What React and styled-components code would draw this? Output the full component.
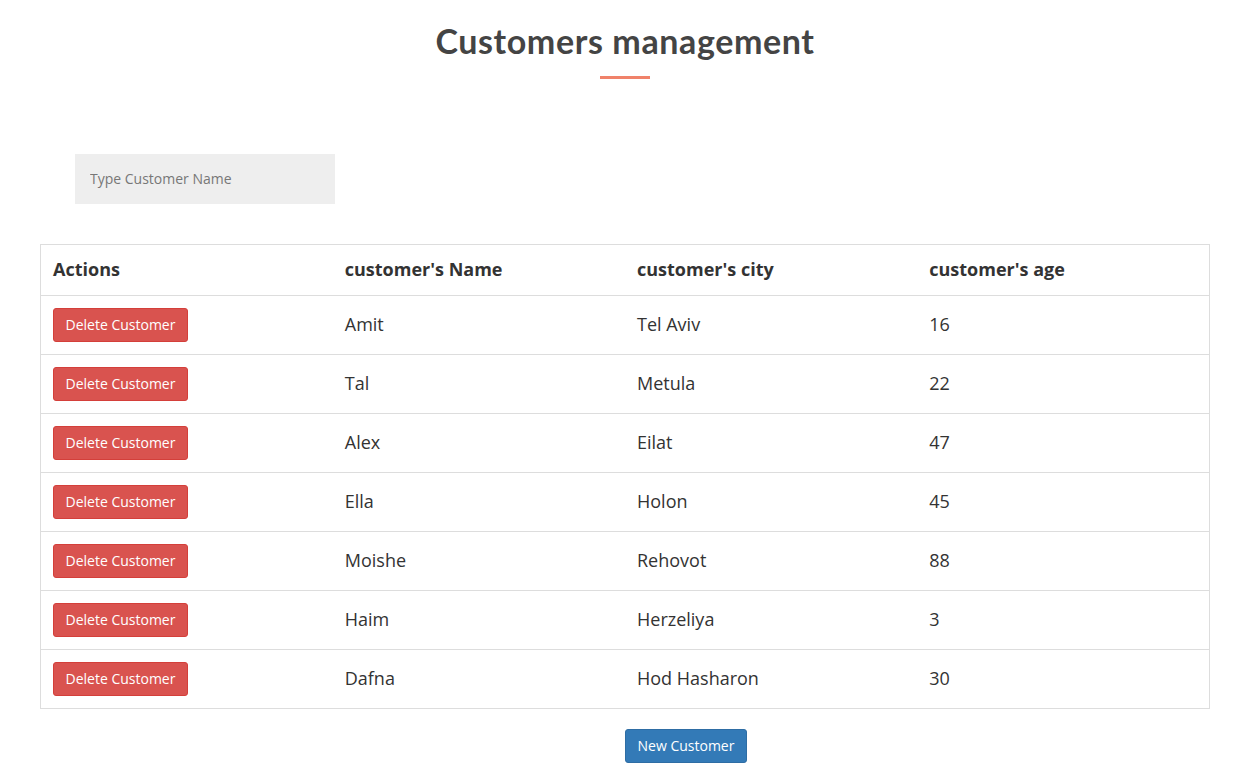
import React from 'react';
import styled, { createGlobalStyle } from 'styled-components';

const GlobalStyle = createGlobalStyle`
  body {
    margin: 0;
    background: #fff;
    font-family: 'Open Sans', sans-serif;
    color: #333;
  }
`;

const Page = styled.div`
  width: 1170px;
  margin-left: 40px;
  padding-top: 19px;
`;

const Heading = styled.div`
  display: flex;
  flex-direction: column;
  align-items: center;
`;

const Title = styled.h1`
  font-family: 'Lato', sans-serif;
  font-weight: 700;
  font-size: 34px;
  line-height: 44px;
  color: #444;
  margin: 0;
  letter-spacing: 0.6px;
`;

const Underline = styled.div`
  width: 50px;
  height: 3px;
  background: #f0826a;
  margin-top: 13px;
`;

const SearchRow = styled.div`
  padding: 75px 0 40px 35px;
`;

const SearchInput = styled.input`
  width: 260px;
  height: 50px;
  box-sizing: border-box;
  border: none;
  background: #eee;
  padding: 0 15px 1px;
  font-family: 'Open Sans', sans-serif;
  font-size: 14px;
  color: #555;
  outline: none;

  &::placeholder {
    color: #777;
  }
`;

const Table = styled.table`
  width: 100%;
  border-collapse: collapse;
  border: 1px solid #ddd;
  table-layout: fixed;
`;

const Th = styled.th`
  text-align: left;
  font-size: 18px;
  font-weight: 700;
  color: #333;
  height: 48px;
  padding: 0 12px 2px;
  border-bottom: 1px solid #ddd;
`;

const Td = styled.td`
  font-size: 18px;
  color: #333;
  height: 56px;
  padding: 0 12px 2px;
  border-top: 1px solid #ddd;
`;

const ActionCell = styled(Td)`
  padding: 1px 12px 1px;
`;

const Button = styled.button`
  display: block;
  font-family: 'Open Sans', sans-serif;
  font-size: 14px;
  color: #fff;
  background: ${(p) => (p.$variant === 'danger' ? '#d9534f' : '#337ab7')};
  border: 1px solid ${(p) => (p.$variant === 'danger' ? '#d43f3a' : '#2e6da4')};
  border-radius: 3px;
  height: 34px;
  padding: 0 11.5px 1px;
  cursor: pointer;
`;

const Footer = styled.div`
  padding: 20px 0 0 585px;
`;

const customers = [
  { name: 'Amit', city: 'Tel Aviv', age: 16 },
  { name: 'Tal', city: 'Metula', age: 22 },
  { name: 'Alex', city: 'Eilat', age: 47 },
  { name: 'Ella', city: 'Holon', age: 45 },
  { name: 'Moishe', city: 'Rehovot', age: 88 },
  { name: 'Haim', city: 'Herzeliya', age: 3 },
  { name: 'Dafna', city: 'Hod Hasharon', age: 30 },
];

const App = () => (
  <>
    <GlobalStyle />
    <Page>
      <Heading>
        <Title>Customers management</Title>
        <Underline />
      </Heading>
      <SearchRow>
        <SearchInput placeholder="Type Customer Name" />
      </SearchRow>
      <Table>
        <thead>
          <tr>
            <Th>Actions</Th>
            <Th>customer's Name</Th>
            <Th>customer's city</Th>
            <Th>customer's age</Th>
          </tr>
        </thead>
        <tbody>
          {customers.map((c) => (
            <tr key={c.name}>
              <ActionCell>
                <Button $variant="danger">Delete Customer</Button>
              </ActionCell>
              <Td>{c.name}</Td>
              <Td>{c.city}</Td>
              <Td>{c.age}</Td>
            </tr>
          ))}
        </tbody>
      </Table>
      <Footer>
        <Button>New Customer</Button>
      </Footer>
    </Page>
  </>
);

export default App;
